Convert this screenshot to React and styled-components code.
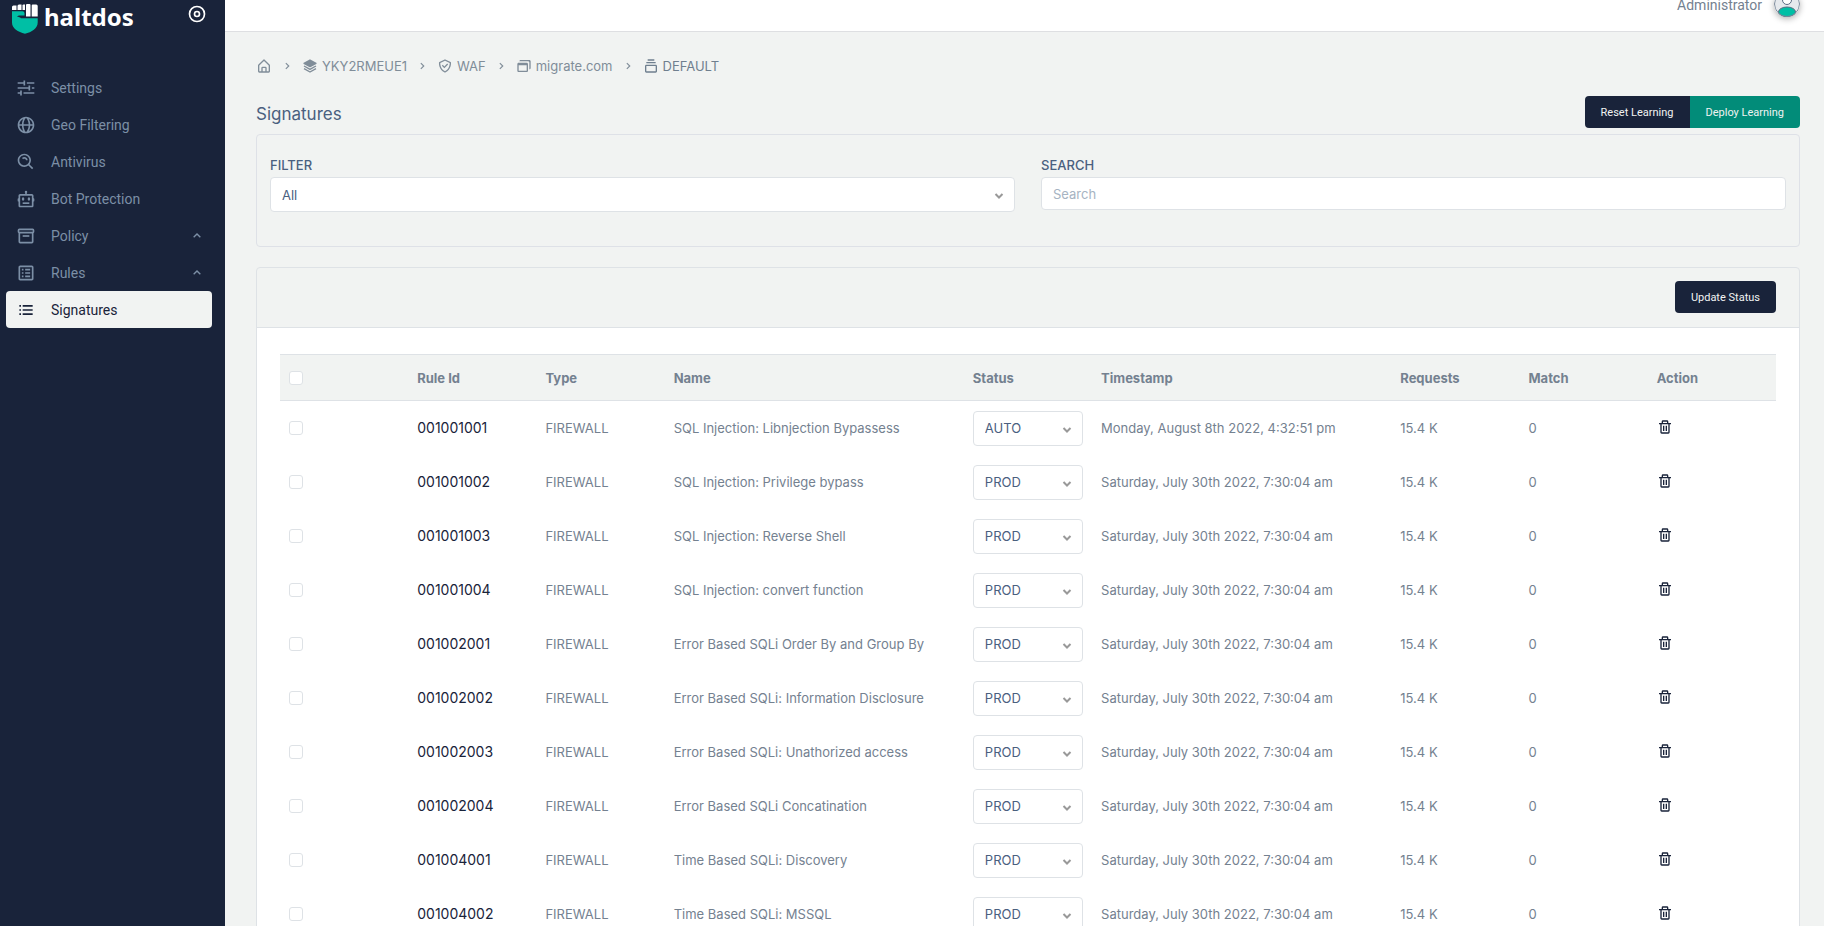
import React, { useState } from 'react';
import styled, { createGlobalStyle, css } from 'styled-components';
import {
  BiBot,
  BiBox,
  BiCheckShield,
  BiChevronRight,
  BiChevronUp,
  BiCollection,
  BiDisc,
  BiGlobe,
  BiHomeAlt,
  BiListUl,
  BiSearchAlt,
  BiSlider,
  BiSolidLayer,
  BiSpreadsheet,
  BiTrash,
  BiWindows,
} from 'react-icons/bi';

const menu = [
  { label: 'Settings', icon: BiSlider },
  { label: 'Geo Filtering', icon: BiGlobe },
  { label: 'Antivirus', icon: BiSearchAlt },
  { label: 'Bot Protection', icon: BiBot },
  { label: 'Policy', icon: BiBox, expandable: true },
  { label: 'Rules', icon: BiSpreadsheet, expandable: true },
  { label: 'Signatures', icon: BiListUl, active: true },
];

const crumbs = [
  { label: 'YKY2RMEUE1', icon: BiSolidLayer },
  { label: 'WAF', icon: BiCheckShield },
  { label: 'migrate.com', icon: BiWindows },
  { label: 'DEFAULT', icon: BiCollection, current: true },
];

const JULY = 'Saturday, July 30th 2022, 7:30:04 am';

const signatures = [
  { id: '001001001', name: 'SQL Injection: Libnjection Bypassess', status: 'AUTO', time: 'Monday, August 8th 2022, 4:32:51 pm' },
  { id: '001001002', name: 'SQL Injection: Privilege bypass', status: 'PROD', time: JULY },
  { id: '001001003', name: 'SQL Injection: Reverse Shell', status: 'PROD', time: JULY },
  { id: '001001004', name: 'SQL Injection: convert function', status: 'PROD', time: JULY },
  { id: '001002001', name: 'Error Based SQLi Order By and Group By', status: 'PROD', time: JULY },
  { id: '001002002', name: 'Error Based SQLi: Information Disclosure', status: 'PROD', time: JULY },
  { id: '001002003', name: 'Error Based SQLi: Unathorized access', status: 'PROD', time: JULY },
  { id: '001002004', name: 'Error Based SQLi Concatination', status: 'PROD', time: JULY },
  { id: '001004001', name: 'Time Based SQLi: Discovery', status: 'PROD', time: JULY },
  { id: '001004002', name: 'Time Based SQLi: MSSQL', status: 'PROD', time: JULY },
];

const LogoMark = () => (
  <svg width="26" height="30" viewBox="0 0 26 30" aria-hidden="true">
    <g fill="#fff">
      <path d="M0 3a1.5 1.5 0 0 1 1.5-1.5h3V6H0z" />
      <path d="M5.5 2A1.5 1.5 0 0 1 7 .5h2.5V6h-4z" />
      <path d="M10.5 1.5a1 1 0 0 1 1-1H13V6h-2.500z" />
      <path d="M14 1a1 1 0 0 1 1-1h2.500a1 1 0 0 1 1 1v11.500H14z" />
      <path d="M19.700 1.500a1 1 0 0 1 1-1h3.500a1.500 1.500 0 0 1 1.500 1.500v10.500h-6z" />
    </g>
    <path
      fill="#00bfa5"
      d="M0 7.300h10.500a2 2 0 0 1 2 2v2.200H8c-1.400 0-2.400.4-3 1.200 1.600.1 3 .4 4 1.600h16.700v4.200c0 6-6 9.600-12.700 11.300C6 28 0 24.500 0 18.500z"
    />
  </svg>
);

const Caret = () => (
  <CaretIcon viewBox="0 0 10 6" aria-hidden="true">
    <path d="M1.500 1 5 4.500 8.500 1" fill="none" stroke="#999" strokeWidth="2" />
  </CaretIcon>
);

const Dropdown = ({ id, label, options, value, onChange }) => (
  <SelectBox>
    <Select id={id} aria-label={label} value={value} onChange={(e) => onChange(e.target.value)}>
      {options.map((option) => (
        <option key={option}>{option}</option>
      ))}
    </Select>
    <Caret />
  </SelectBox>
);

const Sidebar = () => (
  <Aside>
    <Brand>
      <BrandLink href="#">
        <LogoMark />
        haltdos
      </BrandLink>
      <PinButton type="button" aria-label="Collapse menu">
        <BiDisc size={20} />
      </PinButton>
    </Brand>
    <Menu>
      {menu.map(({ label, icon: Icon, active, expandable }) => (
        <MenuLink key={label} href="#" $active={active}>
          <Icon size={20} />
          <MenuLabel>{label}</MenuLabel>
          {expandable && <BiChevronUp size={16} />}
        </MenuLink>
      ))}
    </Menu>
  </Aside>
);

const Header = () => (
  <TopBar>
    <Account type="button">
      Administrator
      <Avatar viewBox="0 0 26 26" aria-hidden="true">
        <circle cx="13" cy="13" r="12.500" fill="#e6e9ed" />
        <ellipse cx="13" cy="21" rx="8.500" ry="5" fill="#00bfa5" stroke="#5b6b82" />
        <circle cx="13" cy="9" r="4.500" fill="#fff" stroke="#5b6b82" />
        <circle cx="13" cy="13" r="12.500" fill="none" stroke="#7b899a" />
      </Avatar>
    </Account>
  </TopBar>
);

const App = () => {
  const [rows, setRows] = useState(signatures);
  const [filter, setFilter] = useState('All');
  const [search, setSearch] = useState('');
  const [selected, setSelected] = useState([]);

  const visible = rows.filter(
    (row) =>
      (filter === 'All' || row.status === filter) &&
      `${row.id} ${row.name}`.toLowerCase().includes(search.toLowerCase())
  );

  const toggleRow = (id) => {
    setSelected((prev) => (prev.includes(id) ? prev.filter((x) => x !== id) : [...prev, id]));
  };

  const toggleAll = (e) => {
    setSelected(e.target.checked ? rows.map((row) => row.id) : []);
  };

  const changeStatus = (id, status) => {
    setRows(rows.map((row) => (row.id === id ? { ...row, status } : row)));
  };

  const removeRow = (id) => {
    setRows(rows.filter((row) => row.id !== id));
  };

  return (
    <>
      <GlobalStyle />
      <Layout>
        <Sidebar />
        <Main>
          <Header />
          <Content>
            <Breadcrumb aria-label="Breadcrumb">
              <Crumb href="#" aria-label="Home">
                <BiHomeAlt size={16} />
              </Crumb>
              {crumbs.map(({ label, icon: Icon, current }) => (
                <React.Fragment key={label}>
                  <BiChevronRight size={14} />
                  <Crumb href="#" $current={current}>
                    <Icon size={16} />
                    {label}
                  </Crumb>
                </React.Fragment>
              ))}
            </Breadcrumb>

            <TitleRow>
              <Title>Signatures</Title>
              <ButtonGroup>
                <Button type="button">Reset Learning</Button>
                <Button type="button" $green>
                  Deploy Learning
                </Button>
              </ButtonGroup>
            </TitleRow>

            <FilterCard>
              <Field>
                <Label htmlFor="filter">FILTER</Label>
                <Dropdown id="filter" options={['All', 'AUTO', 'PROD']} value={filter} onChange={setFilter} />
              </Field>
              <Field>
                <Label htmlFor="search">SEARCH</Label>
                <Input
                  id="search"
                  type="text"
                  placeholder="Search"
                  value={search}
                  onChange={(e) => setSearch(e.target.value)}
                />
              </Field>
            </FilterCard>

            <Card>
              <CardHeader>
                <Button type="button">Update Status</Button>
              </CardHeader>
              <CardBody>
                <Table>
                  <colgroup>
                    <col />
                    <col />
                    <col />
                    <WideCol />
                    <col />
                    <WideCol />
                    <col />
                    <col />
                    <col />
                  </colgroup>
                  <thead>
                    <tr>
                      <Th>
                        <Checkbox
                          type="checkbox"
                          aria-label="Select all"
                          checked={rows.length > 0 && selected.length === rows.length}
                          onChange={toggleAll}
                        />
                      </Th>
                      <Th>Rule Id</Th>
                      <Th>Type</Th>
                      <Th>Name</Th>
                      <Th>Status</Th>
                      <Th>Timestamp</Th>
                      <Th>Requests</Th>
                      <Th>Match</Th>
                      <Th>Action</Th>
                    </tr>
                  </thead>
                  <tbody>
                    {visible.map((row) => (
                      <tr key={row.id}>
                        <Td>
                          <Checkbox
                            type="checkbox"
                            aria-label={`Select ${row.id}`}
                            checked={selected.includes(row.id)}
                            onChange={() => toggleRow(row.id)}
                          />
                        </Td>
                        <Td>
                          <RuleLink href="#">{row.id}</RuleLink>
                        </Td>
                        <Td>FIREWALL</Td>
                        <Td>{row.name}</Td>
                        <Td>
                          <Dropdown
                            label={`Status of ${row.id}`}
                            options={['AUTO', 'PROD']}
                            value={row.status}
                            onChange={(status) => changeStatus(row.id, status)}
                          />
                        </Td>
                        <Td>{row.time}</Td>
                        <Td>15.4 K</Td>
                        <Td>0</Td>
                        <Td>
                          <IconButton type="button" aria-label={`Delete ${row.id}`} onClick={() => removeRow(row.id)}>
                            <BiTrash size={16} />
                          </IconButton>
                        </Td>
                      </tr>
                    ))}
                  </tbody>
                </Table>
              </CardBody>
            </Card>
          </Content>
        </Main>
      </Layout>
    </>
  );
};

export default App;

const GlobalStyle = createGlobalStyle`
  * {
    box-sizing: border-box;
  }

  body {
    margin: 0;
    background: #f1f3f2;
    color: #748190;
    font-family: Inter, 'Liberation Sans', sans-serif;
    font-size: 13px;
    line-height: 20px;
  }

  a {
    color: inherit;
    text-decoration: none;
  }

  button,
  input,
  select {
    font-family: inherit;
  }

  svg {
    flex-shrink: 0;
  }
`;

const Layout = styled.div`
  display: flex;
  height: 100vh;
`;

const Aside = styled.aside`
  flex: 0 0 225px;
  background: #19233a;
`;

const Brand = styled.div`
  display: flex;
  justify-content: space-between;
  align-items: flex-start;
  height: 69px;
  padding: 4px 18px 0 12px;
`;

const BrandLink = styled.a`
  display: flex;
  gap: 6px;
  color: #fff;
  font-family: 'Noto Sans', sans-serif;
  font-size: 24px;
  font-weight: 700;
  line-height: 26px;
`;

const PinButton = styled.button`
  display: flex;
  padding: 0;
  border: none;
  background: none;
  color: #fff;
  cursor: pointer;
`;

const Menu = styled.nav`
  display: flex;
  flex-direction: column;
  padding: 0 13px 0 6px;
`;

const MenuLink = styled.a`
  display: flex;
  align-items: center;
  height: 37px;
  padding: 0 7px 0 10px;
  border-radius: 4px;
  color: #7c8fa6;
  font-family: Roboto, 'Liberation Sans', sans-serif;
  font-size: 14px;

  ${({ $active }) =>
    $active &&
    css`
      background: #f1f3f2;
      color: #19233a;
    `}
`;

const MenuLabel = styled.span`
  flex: 1;
  margin-left: 15px;
`;

const Main = styled.div`
  display: flex;
  flex-direction: column;
  flex: 1;
  min-width: 0;
`;

const TopBar = styled.header`
  display: flex;
  justify-content: flex-end;
  align-items: flex-start;
  flex: 0 0 32px;
  padding-right: 24px;
  overflow: hidden;
  background: #fff;
  border-bottom: 1px solid #dedfe2;
`;

const Account = styled.button`
  display: flex;
  align-items: flex-start;
  gap: 12px;
  padding: 0;
  border: none;
  background: none;
  color: #748190;
  font-family: Roboto, 'Liberation Sans', sans-serif;
  font-size: 14px;
  line-height: 10px;
  cursor: pointer;
`;

const Avatar = styled.svg`
  width: 26px;
  height: 26px;
  margin-top: -9px;
  border-radius: 50%;
  box-shadow: 0 2px 6px rgba(0, 0, 0, 0.3);
`;

const Content = styled.main`
  flex: 1;
  padding: 24px 24px 24px 31px;
  overflow-y: auto;
  scrollbar-width: none;
`;

const Breadcrumb = styled.nav`
  display: flex;
  align-items: center;
  gap: 8px;
  color: #808d99;
`;

const Crumb = styled.a`
  display: flex;
  align-items: center;
  gap: 4px;
  color: ${({ $current }) => ($current ? '#6f7f8f' : 'inherit')};
`;

const TitleRow = styled.div`
  display: flex;
  justify-content: space-between;
  align-items: center;
  margin: 20px 0 6px;
`;

const Title = styled.h1`
  margin: 4px 0 0;
  color: #4a607f;
  font-size: 17px;
  font-weight: 400;
`;

const ButtonGroup = styled.div`
  display: flex;
`;

const Button = styled.button`
  height: 32px;
  padding: 0 16px;
  border: none;
  border-radius: 4px;
  background: ${({ $green }) => ($green ? '#028c79' : '#19233a')};
  color: #f1f3f2;
  font-family: Roboto, 'Liberation Sans', sans-serif;
  font-size: 11px;
  cursor: pointer;

  ${ButtonGroup} &:first-child {
    border-radius: 4px 0 0 4px;
  }

  ${ButtonGroup} &:last-child {
    border-radius: 0 4px 4px 0;
  }
`;

const FilterCard = styled.section`
  display: grid;
  grid-template-columns: 1fr 1fr;
  gap: 26px;
  padding: 20px 13px 34px;
  border: 1px solid #dee1e7;
  border-radius: 4px;
`;

const Field = styled.div`
  display: flex;
  flex-direction: column;
  gap: 2px;
`;

const Label = styled.label`
  color: #4a607f;
  font-weight: 500;
`;

const controlStyle = css`
  width: 100%;
  padding: 0 11px;
  border: 1px solid #dee2e6;
  border-radius: 4px;
  background: #fff;
  color: #4a607f;
  font-size: 13px;
`;

const Input = styled.input`
  ${controlStyle}
  height: 33px;

  &::placeholder {
    color: #a6b3c2;
  }
`;

const SelectBox = styled.div`
  position: relative;
`;

const Select = styled.select`
  ${controlStyle}
  display: block;
  height: 35px;
  appearance: none;
`;

const CaretIcon = styled.svg`
  position: absolute;
  top: 16px;
  right: 11px;
  width: 10px;
  height: 6px;
  pointer-events: none;
`;

const Card = styled.section`
  margin-top: 20px;
  border: 1px solid #dee2e6;
  border-radius: 4px;
`;

const CardHeader = styled.div`
  display: flex;
  justify-content: flex-end;
  padding: 13px 23px 14px;
  border-bottom: 1px solid #dee2e6;
`;

const CardBody = styled.div`
  padding: 26px 23px;
  background: #fff;
`;

const Table = styled.table`
  width: 100%;
  border-spacing: 0;
  table-layout: fixed;
`;

const WideCol = styled.col`
  width: 20%;
`;

const Th = styled.th`
  height: 47px;
  padding: 0 9px;
  border: solid #dee2e6;
  border-width: 1px 0;
  background: #f1f3f2;
  font-weight: 700;
  text-align: left;
`;

const Td = styled.td`
  height: 54px;
  padding: 0 9px;
  white-space: nowrap;
`;

const RuleLink = styled.a`
  color: #19233a;
  font-size: 14px;
`;

const Checkbox = styled.input`
  display: block;
  width: 14px;
  height: 14px;
  margin: 0;
  border: 1px solid #dee2e6;
  border-radius: 3px;
  background: #fff;
  appearance: none;

  &:checked {
    background: #028c79;
    border-color: #028c79;
  }
`;

const IconButton = styled.button`
  display: flex;
  padding: 0 0 3px;
  border: none;
  background: none;
  color: #19233a;
  cursor: pointer;
`;
